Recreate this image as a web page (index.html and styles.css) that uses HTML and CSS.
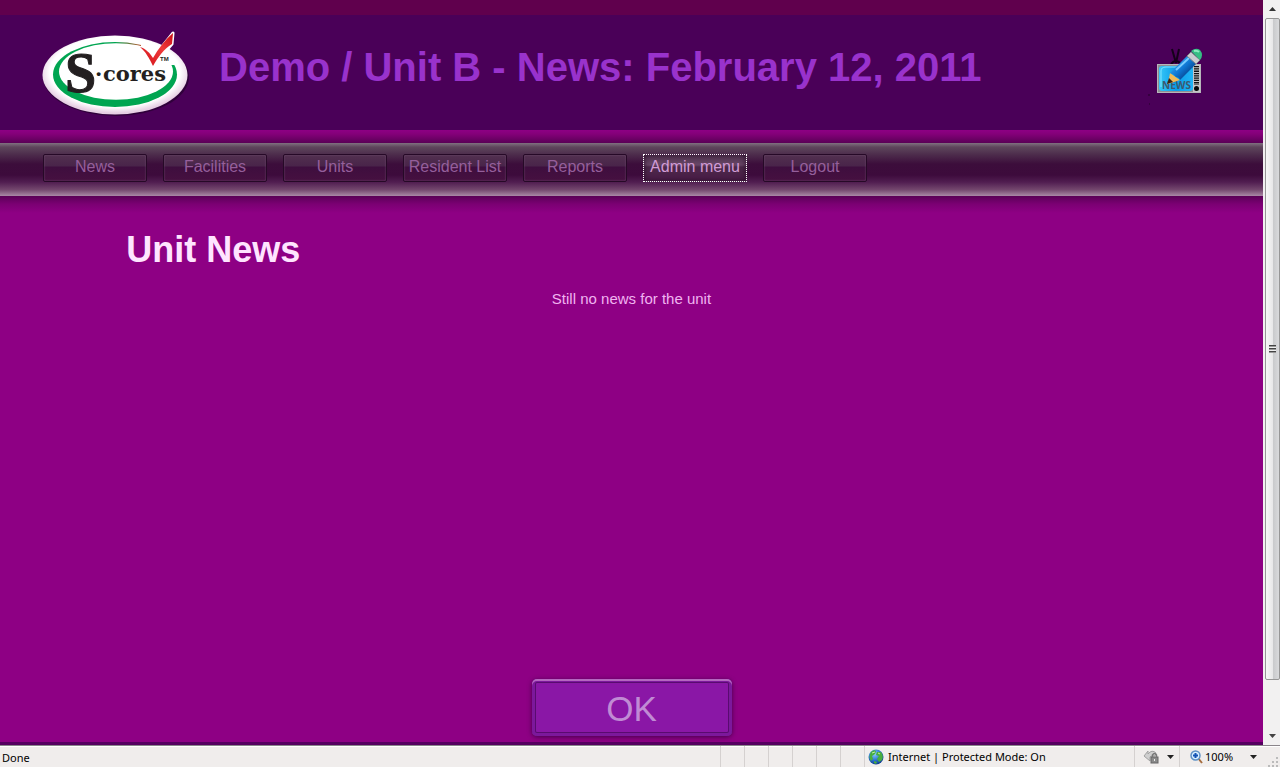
FILE: index.html
```html
<!DOCTYPE html>
<html lang="en">
<head>
<meta charset="utf-8">
<title>Demo / Unit B - News</title>
<link rel="stylesheet" href="styles.css">
</head>
<body>
<div class="viewport">
  <div class="page">
    <header class="banner">
      <svg class="logo" width="152" height="92" viewBox="0 0 152 92" role="img" aria-label="S-cores">
        <defs>
          <radialGradient id="oval" cx=".5" cy=".46" r=".52"><stop offset=".86" stop-color="#fff"/><stop offset="1" stop-color="#e6cfe3"/></radialGradient>
          <linearGradient id="tick" x1="0" x2="1" y1="1" y2="0"><stop offset="0" stop-color="#d01018"/><stop offset=".6" stop-color="#f03a3a"/><stop offset="1" stop-color="#c80c14"/></linearGradient>
          <linearGradient id="ring" gradientUnits="userSpaceOnUse" x1="75" y1="0" x2="103" y2="0"><stop offset="0" stop-color="#00a551"/><stop offset="1" stop-color="#c8502c"/></linearGradient>
          <clipPath id="ring-lower"><path d="M0 0H75V38H152V92H0Z"/></clipPath>
          <clipPath id="ring-upper"><path d="M75 0H101V38H75Z"/></clipPath>
        </defs>
        <ellipse cx="76" cy="50" rx="73" ry="39" fill="#1f0028" opacity=".6"/>
        <ellipse cx="75" cy="48" rx="72.500" ry="39.500" fill="url(#oval)"/>
        <ellipse cx="75" cy="47.500" rx="62" ry="32.500" fill="#00a551" clip-path="url(#ring-lower)"/>
        <ellipse cx="75" cy="47.500" rx="62" ry="32.500" fill="url(#ring)" clip-path="url(#ring-upper)"/>
        <ellipse cx="76" cy="44.500" rx="57" ry="28.300" fill="#fff"/>
        <path d="M102 21L113 31L133 6L132 17L113 39Z" fill="#fff" stroke="#fff" stroke-width="3" stroke-linejoin="round"/>
        <path d="M100 20C106 22 110 26 113 31C118 22 125 13 133 6L132 17C124 22 118 30 113 39C109 31 106 25 100 20Z" fill="url(#tick)"/>
        <text class="logo-s" x="25" y="65">S</text>
        <text class="logo-word" x="55" y="54">·</text>
        <text class="logo-word" x="63" y="54">cores</text>
        <text class="logo-tm" x="120" y="34">TM</text>
      </svg>
      <h1 class="title">Demo / Unit B - News: February 12, 2011</h1>
      <svg class="news-icon" width="56" height="52" viewBox="0 0 56 52" role="img" aria-label="News">
        <defs>
          <linearGradient id="screen" x1="0" x2="1"><stop offset="0" stop-color="#37c7f7"/><stop offset=".5" stop-color="#099cea"/><stop offset="1" stop-color="#20b5f4"/></linearGradient>
          <linearGradient id="pencil" x1="0" y1="0" x2="1" y2="1"><stop offset=".2" stop-color="#3ba9f0"/><stop offset=".5" stop-color="#0f78d4"/><stop offset=".8" stop-color="#063c84"/></linearGradient>
        </defs>
        <path d="M24 2L28 16L31 2M23 17Q28 11 33 17" fill="none" stroke="#14001a" stroke-width="2"/>
        <path d="M0 48h2M1 57h1" stroke="#210027"/>
        <rect x="9.500" y="17.500" width="43" height="28" fill="#8d8f92" stroke="#b6b6ba"/>
        <rect x="11" y="19" width="34" height="25" rx="3" fill="url(#screen)"/>
        <path d="M13 40V24Q13 20 18 20H43" fill="none" stroke="#83e4ff"/>
        <rect x="45" y="18" width="7" height="27" fill="#c5c6c8"/>
        <path d="M48.500 19v19" stroke="#111" stroke-width="5" stroke-dasharray="1.300 1"/>
        <circle cx="48.500" cy="41.500" r="2.500" fill="#080808"/>
        <text class="tv-text" x="14" y="42">NEWS</text>
        <path d="M20 37L22 26L32 33Z" fill="#f1bb58"/>
        <path d="M19 37L21 31L25 35Z" fill="#3b2414"/>
        <path d="M22 26L40 8L48 17L32 33Q31 30 28 30Q26 27 22 26Z" fill="url(#pencil)"/>
        <path d="M28 23L41 11" stroke="#77ccff" stroke-width="2"/>
        <path d="M39 9L43 5L52 13L48 17Z" fill="#c9ccd0" stroke="#80858a"/>
        <path d="M43 4Q48 0 52 3Q56 8 52 13Z" fill="#35bd83"/>
        <path d="M46 4Q49 3 51 5" fill="none" stroke="#8deac0" stroke-width="2"/>
      </svg>
    </header>
    <nav class="menu" aria-label="Main">
      <button class="menu-item" type="button">News</button>
      <button class="menu-item" type="button">Facilities</button>
      <button class="menu-item" type="button">Units</button>
      <button class="menu-item" type="button">Resident List</button>
      <button class="menu-item" type="button">Reports</button>
      <button class="menu-item menu-item-active" type="button">Admin menu</button>
      <button class="menu-item" type="button">Logout</button>
    </nav>
    <main class="content">
      <h2 class="heading">Unit News</h2>
      <p class="message">Still no news for the unit</p>
      <button class="ok" type="button">OK</button>
    </main>
  </div>
  <div class="scrollbar" aria-hidden="true">
    <svg width="7" height="4" viewBox="0 0 7 4"><path d="M0 4L3.500 0L7 4Z" fill="#333"/></svg>
    <div class="thumb"><span class="grip"></span></div>
    <svg width="7" height="4" viewBox="0 0 7 4"><path d="M0 0L3.500 4L7 0Z" fill="#444"/></svg>
  </div>
</div>
<footer class="status">
  <span class="status-text">Done</span>
  <span class="pane"></span><span class="pane"></span><span class="pane"></span><span class="pane"></span><span class="pane"></span><span class="pane"></span>
  <div class="pane zone">
    <svg width="16" height="16" viewBox="0 0 16 16"><defs><radialGradient id="globe" cx=".4" cy=".3" r=".7"><stop offset="0" stop-color="#8fd0ff"/><stop offset=".6" stop-color="#2873cf"/><stop offset="1" stop-color="#123e91"/></radialGradient></defs><circle cx="8" cy="8" r="7.500" fill="url(#globe)"/><path d="M3 3Q6 0 8 2L7 5L4 7L5 10L3 12Q0 8 3 3ZM9 3L13 3Q16 7 14 11L11 13L9 10L11 7L8 6ZM6 12L9 13L8 15L6 14Z" fill="#48ae3f"/><path d="M4 4L7 3M10 4L12 5" stroke="#c2f0a4"/></svg>
    <span>Internet | Protected Mode: On</span>
  </div>
  <button class="pane tool lock" type="button" aria-label="Privacy">
    <svg width="17" height="16" viewBox="0 0 17 16"><path d="M1 7L5 2V5Q9 0 13 4L12 7Q9 6 7 8V12Z" fill="#cfcfcf" stroke="#a2a2a2"/><rect x="8" y="8" width="7" height="6" fill="#8b8b8b" stroke="#666"/><path d="M9.500 8V6Q11.500 3 13.500 6V8" fill="none" stroke="#777" stroke-width="1.500"/><path d="M11.500 10v2" stroke="#eee"/></svg>
    <svg width="7" height="4" viewBox="0 0 7 4"><path d="M0 0H7L3.500 4Z" fill="#222"/></svg>
  </button>
  <button class="pane tool zoom" type="button">
    <svg width="13" height="14" viewBox="0 0 13 14"><path d="M8 8L12 13" stroke="#a56c3d" stroke-width="2"/><circle cx="5.500" cy="5.500" r="4.500" fill="#d6eeff" stroke="#5d91c5" stroke-width="1.500"/><path d="M5.500 3v5M3 5.500h5" stroke="#1253b4" stroke-width="2"/></svg>
    <span class="zoom-value">100%</span>
    <svg width="7" height="4" viewBox="0 0 7 4"><path d="M0 0H7L3.500 4Z" fill="#222"/></svg>
  </button>
  <svg class="resize" width="10" height="10" viewBox="0 0 10 10"><path d="M8 0h2v2h-2zM4 4h2v2h-2zM8 4h2v2h-2zM0 8h2v2h-2zM4 8h2v2h-2zM8 8h2v2h-2z" fill="#bbb"/></svg>
</footer>
</body>
</html>
```
FILE: styles.css
```css
* { box-sizing: border-box; }

body {
  margin: 0;
  height: 100vh;
  display: flex;
  flex-direction: column;
  font-family: "Liberation Sans", Arial, sans-serif;
  font-size: 16px;
}

button {
  font: inherit;
  margin: 0;
  padding: 0;
}

h1, h2, p { margin: 0; }
svg { display: block; flex: none; }

.viewport {
  flex: 1;
  min-height: 0;
  display: flex;
}

.page {
  flex: 1;
  display: flex;
  flex-direction: column;
  background: #8e0084;
  border-bottom: 3px solid #550060;
}

.banner {
  display: flex;
  align-items: flex-start;
  padding: 12px 59px 11px 40px;
  border-top: 15px solid #60004d;
  background: #4a0058;
}

.title {
  flex: 1;
  margin-left: 27px;
  padding-top: 17px;
  font-size: 40px;
  line-height: 46px;
  color: #9932cc;
}

.news-icon {
  margin-top: 20px;
  overflow: visible;
}

.logo-s {
  font: bold 56px "Liberation Serif", serif;
  fill: #231f20;
  stroke: #231f20;
  stroke-width: 1px;
}

.logo-word {
  font: bold 21px "DejaVu Serif", serif;
  fill: #231f20;
}

.logo-tm {
  font: bold 6px "Liberation Sans", sans-serif;
  fill: #231f20;
}

.tv-text {
  font: bold 10px "Noto Sans", sans-serif;
  fill: #3c5a70;
}

.menu {
  display: flex;
  gap: 16px;
  padding: 24px 43px 14px;
  background:
    linear-gradient(#8e0084, #840079 4px, #5a0056) top / 100% 13px no-repeat,
    linear-gradient(#807080 0, #5e465c 4px, #4c2b4b 12px, #3c0d3b 21px, #3d0b3c 32px, #501d50 39px, #75496f 47px, #aa88a6 53px) bottom / 100% 53px no-repeat;
}

.menu-item {
  width: 104px;
  height: 28px;
  padding-bottom: 3px;
  border: 1px solid #260927;
  border-radius: 2px;
  background: linear-gradient(#52304f 0, #49244a 11px, #3e0e3e 12px, #461040 100%);
  box-shadow: inset 0 0 2px #725072;
  color: #955f9b;
  white-space: nowrap;
}

.menu-item-active {
  border: 1px dotted #fff;
  border-radius: 0;
  background: linear-gradient(#543653 0, #684666 10px, #4b2949 12px, #4c1c49 100%);
  box-shadow: inset 0 0 6px #2b102b;
  color: #d19bd5;
}

.content {
  flex: 1;
  display: flex;
  flex-direction: column;
  padding: 33px 0 6px;
  background: linear-gradient(#5a0056, #7b0073 8px, #8e0084 17px);
}

.heading {
  margin-left: 10%;
  font-size: 36px;
  line-height: 42px;
  color: #ffe4ff;
}

.message {
  margin-top: 18px;
  font-size: 15px;
  line-height: 20px;
  text-align: center;
  color: #f0b4f0;
}

.ok {
  align-self: center;
  width: 200px;
  height: 57px;
  margin-top: auto;
  padding-top: 2px;
  border: 0;
  border-radius: 5px;
  background: #8a17a6;
  box-shadow: 0 1px 5px #45004b, inset 0 2px 0 #b566c0, inset 0 0 0 3px #7c189c, inset 0 0 0 4px #590b70, inset 0 -3px 1px #a25db1;
  color: #c08bd4;
  font-size: 35px;
  line-height: 55px;
}

.scrollbar {
  width: 17px;
  display: flex;
  flex-direction: column;
  align-items: center;
  gap: 7px;
  padding: 7px 0 7px 1px;
  background: #f2f1f1;
}

.thumb {
  width: 15px;
  flex: 0 1 662px;
  display: grid;
  place-items: center;
  border: 1px solid #969696;
  border-radius: 2px;
  background: linear-gradient(90deg, #f8f8f8 0, #e8e8e9 50%, #c9cacc 55%, #d9dadc 100%);
}

.scrollbar svg:last-child { margin-top: auto; }

.grip {
  width: 7px;
  height: 8px;
  background: repeating-linear-gradient(#444 0 1px, #999 1px 2px, #eee 2px 3px);
}

.status {
  display: flex;
  align-items: stretch;
  height: 23px;
  border-top: 1px solid #8a858a;
  border-bottom: 1px solid #fff;
  box-shadow: inset 0 1px 0 #fff;
  background: #f0edec;
  color: #000;
  font-family: "Noto Sans", sans-serif;
  font-size: 11px;
  line-height: 23px;
}

.status-text {
  flex: 1;
  padding-left: 2px;
}

.pane {
  width: 24px;
  border: 0;
  border-left: 1px solid #d5d1d0;
}

.zone {
  width: 270px;
  display: flex;
  align-items: center;
  gap: 4px;
  padding-left: 3px;
}

.tool {
  display: flex;
  align-items: center;
  background: none;
  color: inherit;
}

.lock {
  width: 45px;
  gap: 7px;
  padding-left: 8px;
}

.zoom {
  width: 89px;
  gap: 2px;
  padding-left: 10px;
}

.zoom-value { width: 43px; text-align: left; }

.resize {
  align-self: flex-end;
  margin-right: 2px;
}
```
